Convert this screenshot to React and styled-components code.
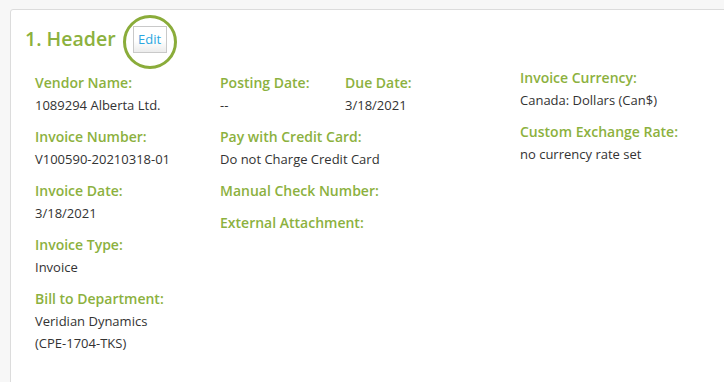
import React from "react";
import styled, { createGlobalStyle } from "styled-components";

const GlobalStyle = createGlobalStyle`
  html, body {
    margin: 0;
    padding: 0;
    background: #f7f7f7;
    overflow: hidden;
    font-family: "Open Sans", "Liberation Sans", sans-serif;
  }
`;

const columns = [
  {
    key: "vendor",
    fields: [
      { label: "Vendor Name:", value: ["1089294 Alberta Ltd."] },
      { label: "Invoice Number:", value: ["V100590-20210318-01"] },
      { label: "Invoice Date:", value: ["3/18/2021"] },
      { label: "Invoice Type:", value: ["Invoice"] },
      {
        label: "Bill to Department:",
        value: ["Veridian Dynamics", "(CPE-1704-TKS)"],
      },
    ],
  },
];

const paymentFields = [
  { label: "Pay with Credit Card:", value: ["Do not Charge Credit Card"] },
  { label: "Manual Check Number:", value: [] },
  { label: "External Attachment:", value: [] },
];

const currencyFields = [
  { label: "Invoice Currency:", value: ["Canada: Dollars (Can$)"] },
  { label: "Custom Exchange Rate:", value: ["no currency rate set"] },
];

const Field = ({ label, value }) => (
  <FieldBox>
    <Label>{label}</Label>
    {value.map((line) => (
      <Value key={line}>{line}</Value>
    ))}
  </FieldBox>
);

const App = () => {
  return (
    <>
      <GlobalStyle />
      <Page>
        <Card>
          <Top>
            <Title>1. Header</Title>
            <EditWrap>
              <EditButton>Edit</EditButton>
              <Circle />
            </EditWrap>
          </Top>
          <Body>
            {columns.map((col) => (
              <Column key={col.key} width={185}>
                {col.fields.map((f) => (
                  <Field key={f.label} label={f.label} value={f.value} />
                ))}
              </Column>
            ))}
            <Column width={300}>
              <Pair>
                <PairCell width={125}>
                  <Field label="Posting Date:" value={["--"]} />
                </PairCell>
                <PairCell width={175}>
                  <Field label="Due Date:" value={["3/18/2021"]} />
                </PairCell>
              </Pair>
              {paymentFields.map((f) => (
                <Field key={f.label} label={f.label} value={f.value} />
              ))}
            </Column>
            <Column width={200} raised>
              {currencyFields.map((f) => (
                <Field key={f.label} label={f.label} value={f.value} />
              ))}
            </Column>
          </Body>
        </Card>
      </Page>
    </>
  );
};

const Page = styled.div`
  padding: 9px 0 0 10px;
  height: 382px;
  box-sizing: border-box;
  overflow: hidden;
`;

const Card = styled.div`
  width: 740px;
  min-height: 420px;
  background: #fff;
  border: 1px solid #dcdcdc;
  border-radius: 3px 0 0 0;
  box-sizing: border-box;
  padding: 15px 0 0 14px;
`;

const Top = styled.div`
  display: flex;
  align-items: center;
  height: 28px;
`;

const Title = styled.h2`
  margin: 0;
  font-size: 19.5px;
  font-weight: 600;
  color: #8cb13e;
  line-height: 28px;
`;

const EditWrap = styled.div`
  position: relative;
  margin-left: 17px;
`;

const EditButton = styled.button`
  display: block;
  font-family: "Open Sans", "Liberation Sans", sans-serif;
  font-size: 13px;
  color: #2aa6e0;
  background: linear-gradient(to bottom, #ffffff 55%, #ececec);
  border: 1px solid #c9c9c9;
  border-radius: 0;
  height: 27px;
  width: 34px;
  padding: 0;
  cursor: pointer;
`;

const Circle = styled.div`
  position: absolute;
  left: -10px;
  top: -11px;
  width: 48px;
  height: 48px;
  border: 3px solid #8aac3a;
  border-radius: 50%;
  pointer-events: none;
`;

const Body = styled.div`
  display: flex;
  padding: 19px 0 0 10px;
`;

const Column = styled.div`
  width: ${({ width }) => width}px;
  flex: none;
  margin-top: ${({ raised }) => (raised ? "-5px" : "0")};
`;

const Pair = styled.div`
  display: flex;
`;

const PairCell = styled.div`
  width: ${({ width }) => width}px;
`;

const FieldBox = styled.div`
  margin-bottom: 10px;
`;

const Label = styled.div`
  font-size: 14px;
  font-weight: 600;
  color: #8cb13e;
  line-height: 22px;
`;

const Value = styled.div`
  font-size: 13px;
  color: #333;
  line-height: 22px;
`;

export default App;
